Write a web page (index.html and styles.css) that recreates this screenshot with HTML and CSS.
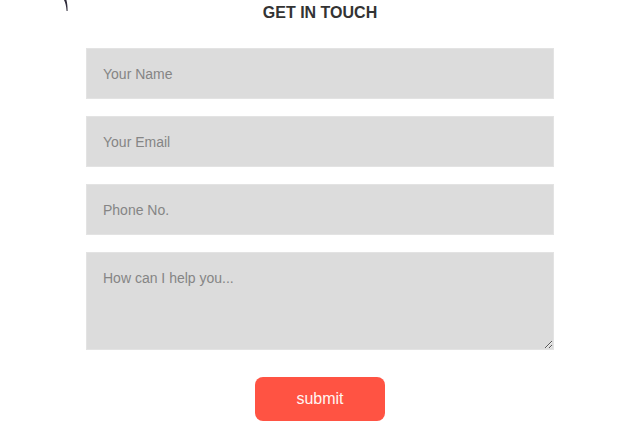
FILE: index.html
```html
<!DOCTYPE html>
<html lang="en">
<head>
<meta charset="utf-8">
<title>Get in touch</title>
<link rel="stylesheet" href="styles.css">
</head>
<body>
<svg class="corner-mark" width="8" height="14" viewBox="0 0 8 14" aria-hidden="true">
  <path d="M1 0 C2.5 3 3.2 6 3.6 11 L4.6 11 C4.6 6 4.2 3 3.4 0 Z" fill="#2e2a3a"/>
</svg>
<section class="contact">
  <h2 class="contact-title">GET IN TOUCH</h2>
  <form class="contact-form">
    <input class="field" type="text" placeholder="Your Name">
    <input class="field" type="email" placeholder="Your Email">
    <input class="field" type="tel" placeholder="Phone No.">
    <textarea class="field field-area" placeholder="How can I help you..."></textarea>
    <button class="submit" type="button">submit</button>
  </form>
</section>
</body>
</html>
```
FILE: styles.css
```css
html, body {
  margin: 0;
  padding: 0;
  background: #ffffff;
}
body {
  font-family: "Liberation Sans", Arial, sans-serif;
  position: relative;
  width: 640px;
  height: 426px;
  overflow: hidden;
}
.corner-mark {
  position: absolute;
  left: 63px;
  top: 0;
}
.contact {
  display: flex;
  flex-direction: column;
  align-items: center;
  padding-top: 4px;
}
.contact-title {
  margin: 0 0 26px;
  font-size: 16px;
  line-height: 18px;
  font-weight: 700;
  color: #333333;
}
.contact-form {
  width: 468px;
  display: flex;
  flex-direction: column;
  align-items: center;
  gap: 17px;
}
.field {
  box-sizing: border-box;
  width: 100%;
  height: 51px;
  margin: 0;
  padding: 0 16px;
  border: 1px solid #e3e3e3;
  background: #dcdcdc;
  font-family: "Liberation Sans", Arial, sans-serif;
  font-size: 14px;
  color: #555555;
  outline: none;
  border-radius: 0;
}
.field::placeholder {
  color: #858585;
  opacity: 1;
}
.field-area {
  height: 98px;
  padding: 16px 16px;
  line-height: 18px;
  resize: vertical;
}
.submit {
  margin-top: 10px;
  width: 130px;
  height: 44px;
  border: none;
  border-radius: 8px;
  background: #ff5343;
  color: #fff5f2;
  font-family: "Liberation Sans", Arial, sans-serif;
  font-size: 16px;
  cursor: pointer;
}
```
